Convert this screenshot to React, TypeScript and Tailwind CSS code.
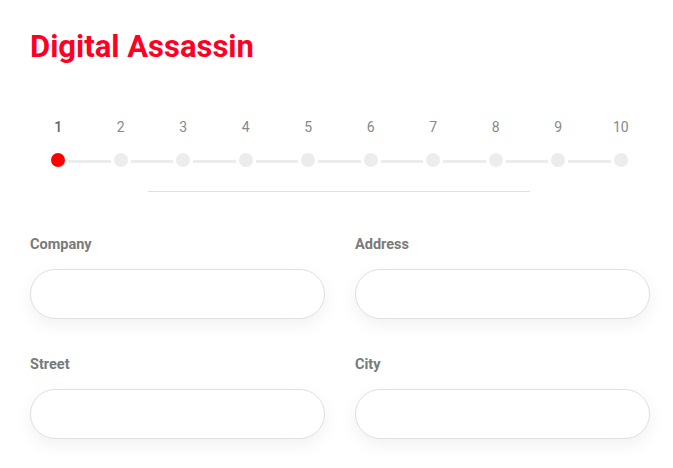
const STEPS = [1, 2, 3, 4, 5, 6, 7, 8, 9, 10];

function Field({ label }: { label: string }) {
  return (
    <div className="flex flex-col">
      <label className="text-[14.5px] font-bold leading-[20px] text-[#7a7a7a]">{label}</label>
      <input
        type="text"
        className="mt-[14px] h-[50px] w-full rounded-full border border-[#e0e0e0] bg-white px-5 shadow-[0_6px_18px_rgba(0,0,0,0.06)] outline-none"
      />
    </div>
  );
}

export default function App() {
  return (
    <div className="min-h-screen bg-white pl-[30px] pt-[29px] font-['Roboto',sans-serif]">
      <h1 className="text-[31px] font-bold leading-[36px] text-[#ff0025]">Digital Assassin</h1>

      <div className="ml-[-3px] mt-[52px] flex w-[625px]">
        {STEPS.map((n, i) => (
          <div key={n} className="relative flex flex-1 flex-col items-center">
            <span className={`text-[14px] leading-[20px] ${i === 0 ? 'font-medium text-[#666]' : 'text-[#888]'}`}>{n}</span>
            <div className="relative mt-[16px] flex h-[14px] w-full items-center justify-center">
              {i > 0 && <div className="absolute left-0 right-[calc(50%+10px)] top-[7px] h-[3px] bg-[#ececec]" />}
              {i < STEPS.length - 1 && <div className="absolute left-[calc(50%+10px)] right-0 top-[7px] h-[3px] bg-[#ececec]" />}
              <div className={`h-[14px] w-[14px] rounded-full ${i === 0 ? 'bg-[#ff0000]' : 'bg-[#ececec]'}`} />
            </div>
          </div>
        ))}
      </div>

      <div className="ml-[118px] mt-[24px] h-px w-[382px] bg-[#e0e0e0]" />

      <div className="mt-[43px] grid w-[620px] grid-cols-2 gap-x-[30px] gap-y-[36px]">
        <Field label="Company" />
        <Field label="Address" />
        <Field label="Street" />
        <Field label="City" />
      </div>
    </div>
  );
}
